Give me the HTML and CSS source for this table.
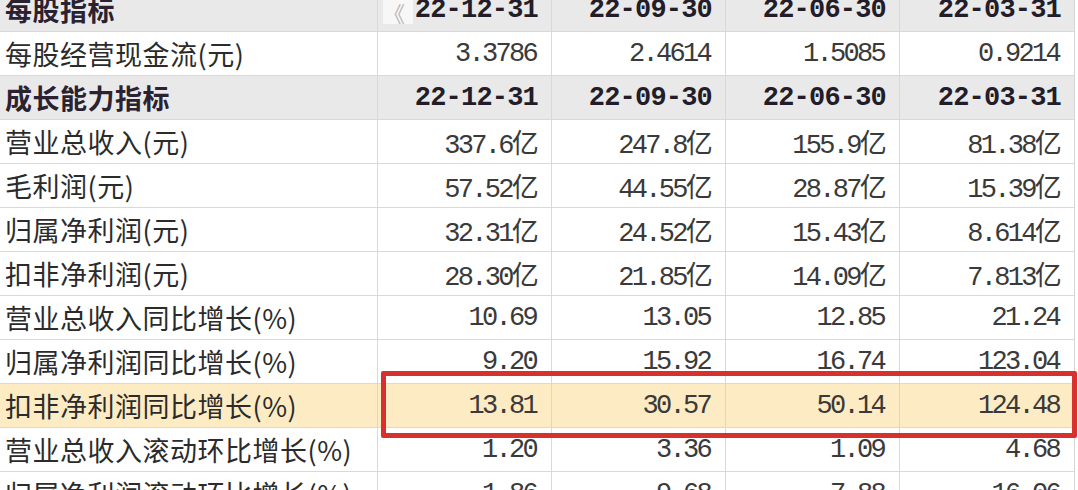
FILE: index.html
```html
<!DOCTYPE html>
<html lang="zh">
<head>
<meta charset="utf-8">
<link rel="stylesheet" href="styles.css">
</head>
<body>
<div class="sheet">
  <div class="row head">
    <div class="label">每股指标</div>
    <div class="num first"><span class="nav">&#x300A;</span>22-12-31</div>
    <div class="num">22-09-30</div>
    <div class="num">22-06-30</div>
    <div class="num">22-03-31</div>
  </div>
  <div class="row">
    <div class="label">每股经营现金流(元)</div>
    <div class="num">3.3786</div><div class="num">2.4614</div><div class="num">1.5085</div><div class="num">0.9214</div>
  </div>
  <div class="row head">
    <div class="label">成长能力指标</div>
    <div class="num">22-12-31</div><div class="num">22-09-30</div><div class="num">22-06-30</div><div class="num">22-03-31</div>
  </div>
  <div class="row">
    <div class="label">营业总收入(元)</div>
    <div class="num">337.6亿</div><div class="num">247.8亿</div><div class="num">155.9亿</div><div class="num">81.38亿</div>
  </div>
  <div class="row">
    <div class="label">毛利润(元)</div>
    <div class="num">57.52亿</div><div class="num">44.55亿</div><div class="num">28.87亿</div><div class="num">15.39亿</div>
  </div>
  <div class="row">
    <div class="label">归属净利润(元)</div>
    <div class="num">32.31亿</div><div class="num">24.52亿</div><div class="num">15.43亿</div><div class="num">8.614亿</div>
  </div>
  <div class="row">
    <div class="label">扣非净利润(元)</div>
    <div class="num">28.30亿</div><div class="num">21.85亿</div><div class="num">14.09亿</div><div class="num">7.813亿</div>
  </div>
  <div class="row">
    <div class="label">营业总收入同比增长(%)</div>
    <div class="num">10.69</div><div class="num">13.05</div><div class="num">12.85</div><div class="num">21.24</div>
  </div>
  <div class="row">
    <div class="label">归属净利润同比增长(%)</div>
    <div class="num">9.20</div><div class="num">15.92</div><div class="num">16.74</div><div class="num">123.04</div>
  </div>
  <div class="row hl">
    <div class="label">扣非净利润同比增长(%)</div>
    <div class="num">13.81</div><div class="num">30.57</div><div class="num">50.14</div><div class="num">124.48</div>
    <div class="mark"></div>
  </div>
  <div class="row">
    <div class="label">营业总收入滚动环比增长(%)</div>
    <div class="num">1.20</div><div class="num">3.36</div><div class="num">1.09</div><div class="num">4.68</div>
  </div>
  <div class="row">
    <div class="label">归属净利润滚动环比增长(%)</div>
    <div class="num">1.86</div><div class="num">9.68</div><div class="num">7.88</div><div class="num">16.06</div>
  </div>
</div>
</body>
</html>
```

FILE: styles.css
```css
html, body {
  margin: 0;
  padding: 0;
  background: #ffffff;
  overflow: hidden;
}
body {
  width: 1078px;
  height: 490px;
}
.sheet {
  margin-top: -12px;
  width: 1074px;
  border-right: 1px solid #d6d6d6;
}
.row {
  position: relative;
  display: grid;
  grid-template-columns: 377px 174px 174px 174px 175px;
  height: 44px;
  box-sizing: border-box;
  border-bottom: 1px solid #d9d9d9;
  background: #ffffff;
}
.row.head {
  background: #e9e9e9;
}
.row.hl {
  background: #fdebc4;
}
.label {
  display: flex;
  align-items: center;
  padding-left: 5px;
  font-family: "Noto Sans CJK SC", sans-serif;
  font-size: 27px;
  color: #2b2b2b;
  white-space: nowrap;
  letter-spacing: 0.5px;
}
.num {
  position: relative;
  display: flex;
  align-items: center;
  justify-content: flex-end;
  padding-right: 15px;
  border-left: 1px solid #d9d9d9;
  font-family: "Liberation Mono", "Noto Sans CJK SC", monospace;
  font-size: 27px;
  letter-spacing: -2.7px;
  color: #3a3a3a;
  white-space: nowrap;
}
.head .label {
  font-weight: 700;
  color: #2a2230;
}
.head .num {
  font-weight: 700;
  letter-spacing: -0.8px;
  padding-right: 13px;
  color: #231c29;
}
.hl .num, .hl .label {
  border-color: #e4d7b9;
}
.nav {
  position: absolute;
  left: 5px;
  top: 12px;
  width: 30px;
  height: 24px;
  background: #f7f7f7;
  color: #b9b9b9;
  font-family: "Noto Sans CJK SC", sans-serif;
  font-size: 22px;
  font-weight: 400;
  letter-spacing: 0;
  line-height: 24px;
  text-align: left;
  overflow: hidden;
}
.mark {
  position: absolute;
  z-index: 2;
  left: 381px;
  top: -13px;
  width: 696px;
  height: 67px;
  box-sizing: border-box;
  border: 5px solid #d8302c;
  border-radius: 2px;
}
```
